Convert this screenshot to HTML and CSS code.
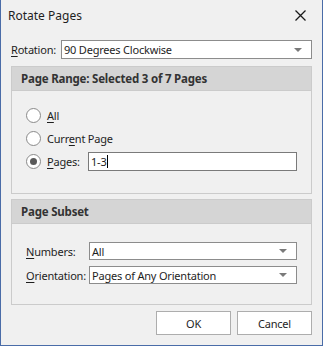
FILE: index.html
```html
<!DOCTYPE html>
<html lang="en">
<head>
    <meta charset="UTF-8">
    <title>Rotate Pages</title>
    <link rel="stylesheet" href="styles.css">
</head>
<body>

    <div class="dialog">
        <!-- Title bar -->
        <div class="titlebar">
            <span class="title">Rotate Pages</span>
            <svg class="close" width="11" height="11" viewBox="0 0 11 11">
                <path d="M0.5 0.5 L10.5 10.5 M10.5 0.5 L0.5 10.5" stroke="#1a1a1a" stroke-width="1.3" fill="none"/>
            </svg>
        </div>

        <div class="content">
            <div class="rotation-row">
                <span class="rotation-label"><u>R</u>otation:</span>
                <div class="combo rotation-combo">
                    <span>90 Degrees Clockwise</span>
                    <span class="arrow"></span>
                </div>
            </div>

            <!-- Page range group -->
            <div class="group range-group">
                <div class="group-header">Page Range: Selected 3 of 7 Pages</div>
                <div class="group-body range-body">
                    <div class="radio-row">
                        <span class="radio"></span>
                        <span class="radio-label"><u>A</u>ll</span>
                    </div>
                    <div class="radio-row">
                        <span class="radio"></span>
                        <span class="radio-label">Curr<u>e</u>nt Page</span>
                    </div>
                    <div class="radio-row">
                        <span class="radio checked"></span>
                        <span class="radio-label pages-label"><u>P</u>ages:</span>
                        <div class="textbox"><span>1-3</span><span class="caret"></span></div>
                    </div>
                </div>
            </div>

            <!-- Page subset group -->
            <div class="group subset-group">
                <div class="group-header">Page Subset</div>
                <div class="group-body subset-body">
                    <div class="field-row">
                        <span class="field-label"><u>N</u>umbers:</span>
                        <div class="combo field-combo">
                            <span>All</span>
                            <span class="arrow"></span>
                        </div>
                    </div>
                    <div class="field-row">
                        <span class="field-label"><u>O</u>rientation:</span>
                        <div class="combo field-combo">
                            <span>Pages of Any Orientation</span>
                            <span class="arrow"></span>
                        </div>
                    </div>
                </div>
            </div>

            <div class="buttons">
                <button>OK</button>
                <button>Cancel</button>
            </div>
        </div>
    </div>

</body>
</html>
```

FILE: styles.css
```css
* {
    margin: 0;
    padding: 0;
    box-sizing: border-box;
}

body {
    font-family: 'Noto Sans', 'Open Sans', sans-serif;
    font-size: 11px;
    letter-spacing: -0.2px;
    color: #1e1e1e;
    background: #f0f0f0;
}

u {
    text-decoration: underline;
    text-underline-offset: 2px;
}

.dialog {
    width: 323px;
    height: 346px;
    background-color: #f0f0f0;
    border: 1px solid #4a6ca8;
    border-top: none;
}

.titlebar {
    height: 30px;
    display: flex;
    align-items: center;
    justify-content: space-between;
    padding: 0 16px 0 7px;
}

.title {
    font-size: 12px;
    letter-spacing: 0;
    color: #1e1e1e;
}

.content {
    padding: 0 10px;
}

.rotation-row {
    margin-top: 10px;
    display: flex;
    align-items: center;
    height: 19px;
}

.rotation-label {
    width: 50px;
}

.combo {
    height: 19px;
    background-color: #fff;
    border: 1px solid #8c8c8c;
    display: flex;
    align-items: center;
    justify-content: space-between;
    padding: 0 9px 0 2px;
}

.rotation-combo {
    width: 251px;
}

.arrow {
    width: 0;
    height: 0;
    border-left: 4px solid transparent;
    border-right: 4px solid transparent;
    border-top: 4px solid #7a7a7a;
}

.group {
    border: 1px solid #cbcbcb;
}

.range-group {
    margin-top: 7px;
}

.subset-group {
    margin-top: 5px;
}

.group-header {
    height: 24px;
    background-color: #d5d5d5;
    border-bottom: 1px solid #cbcbcb;
    font-size: 11.5px;
    font-weight: bold;
    color: #333;
    display: flex;
    align-items: center;
    padding-left: 9px;
}

.range-body {
    height: 102px;
    padding: 13px 0 0 14px;
}

.radio-row {
    height: 23px;
    display: flex;
    align-items: center;
}

.radio {
    width: 15px;
    height: 15px;
    border-radius: 50%;
    border: 1px solid #8a8a8a;
    background-color: #fff;
    display: flex;
    align-items: center;
    justify-content: center;
}

.radio.checked::after {
    content: "";
    width: 7px;
    height: 7px;
    border-radius: 50%;
    background-color: #5a5a5a;
}

.radio-label {
    margin-left: 6px;
}

.pages-label {
    width: 41px;
}

.textbox {
    width: 209px;
    height: 19px;
    background-color: #fff;
    border: 1px solid #7a7a7a;
    display: flex;
    align-items: center;
    padding-left: 2px;
}

.caret {
    width: 1px;
    height: 13px;
    background-color: #000;
}

.subset-body {
    height: 80px;
    padding: 18px 0 0 14px;
    display: flex;
    flex-direction: column;
    gap: 6px;
}

.field-row {
    display: flex;
    align-items: center;
}

.field-label {
    width: 63px;
}

.field-combo {
    width: 208px;
    height: 18px;
}

.buttons {
    margin-top: 6px;
    display: flex;
    justify-content: flex-end;
    gap: 6px;
}

button {
    width: 75px;
    height: 24px;
    font-family: inherit;
    font-size: 11px;
    letter-spacing: -0.2px;
    color: #1e1e1e;
    background-color: #fff;
    border: 1px solid #adadad;
}
```
